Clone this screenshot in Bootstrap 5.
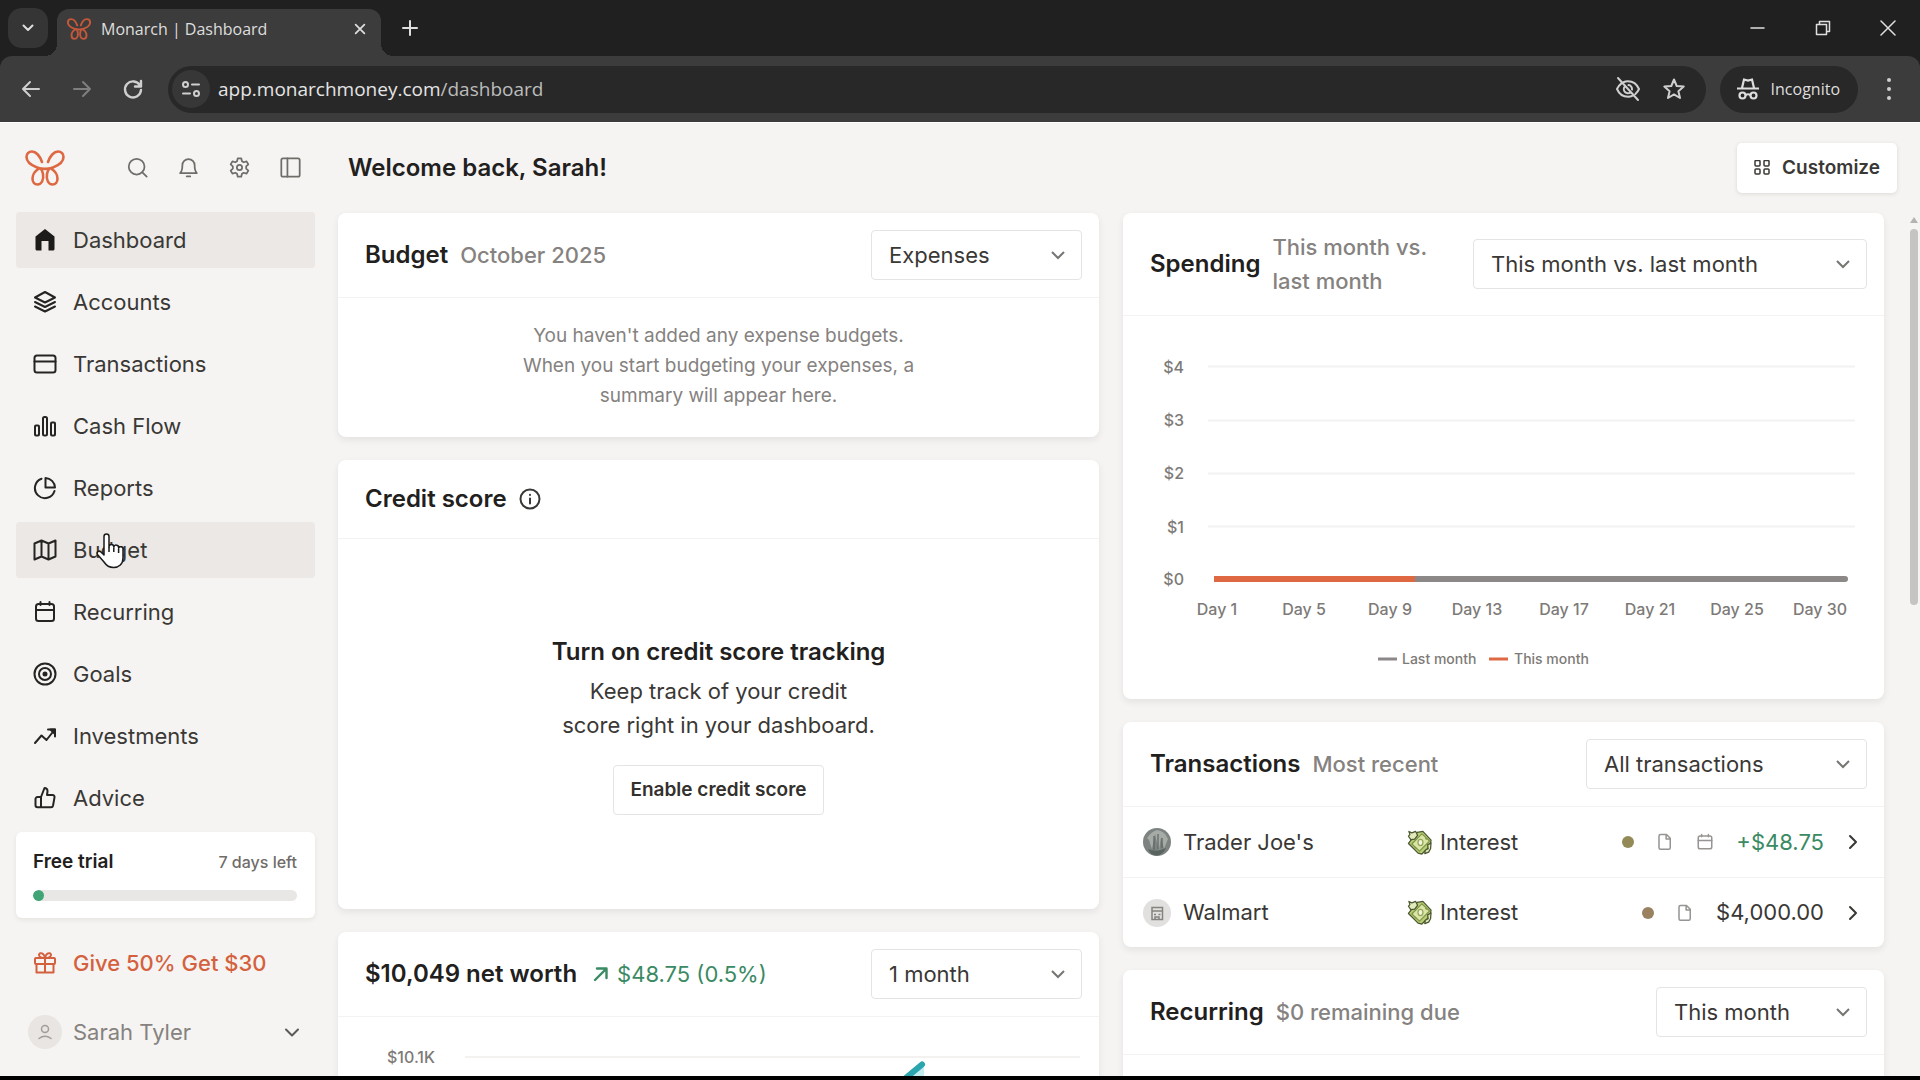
<!DOCTYPE html>
<html lang="en">
<head>
<meta charset="utf-8">
<meta name="viewport" content="width=device-width, initial-scale=1">
<title>Monarch | Dashboard</title>
<link href="https://cdn.jsdelivr.net/npm/bootstrap@5.3.0/dist/css/bootstrap.min.css" rel="stylesheet">
<style>
  :root { --ink:#22201d; --text:#3a3835; --muted:#85827f; --line:#f4f3f1; --orange:#dd6842; --green:#3a8a63; }
  body { font-family: Inter, "Liberation Sans", sans-serif; color: var(--text); background: #f5f4f2; }
  svg { display: block; flex: none; }
  .ico { fill: none; stroke: currentColor; stroke-width: 2; stroke-linecap: round; stroke-linejoin: round; }
  .ico.thin { stroke-width: 1.5; }
  .ico.bold { stroke-width: 2.4; }
  button.bare { background: none; border: 0; padding: 0; color: inherit; }

  /* browser window */
  .browser { background: #202020; color: #dedede; font-family: "Open Sans", "Noto Sans", sans-serif; }
  .tabstrip { height: 56px; padding-left: 8px; }
  .browser .tab-search { width: 40px; height: 40px; border-radius: 14px; background: #353535; margin-top: 8px; }
  .browser-tab { position: relative; width: 324px; height: 47px; margin: 9px 0 0 9px; padding: 0 14px 7px 10px; gap: 10px; background: #3c3c3c; border-radius: 12px 12px 0 0; font-size: 16px; }
  .browser-tab::before, .browser-tab::after { content: ""; position: absolute; bottom: 0; width: 12px; height: 12px; }
  .browser-tab::before { left: -12px; background: radial-gradient(circle at 0 0, transparent 12px, #3c3c3c 12px); }
  .browser-tab::after { right: -12px; background: radial-gradient(circle at 100% 0, transparent 12px, #3c3c3c 12px); }
  .win-ctl { width: 65px; height: 56px; }
  .toolbar { height: 66px; background: #3c3c3c; border-radius: 12px 12px 0 0; padding: 0 20px 0 19px; color: #cfcfcf; }
  .nav-btn { width: 24px; margin-right: 27px; }
  .toolbar .fwd { color: #7f7f7f; }
  .address { height: 47px; background: #282828; border-radius: 24px; padding: 0 20px 0 4px; margin-left: -4px; font-size: 19px; }
  .address .site-info { width: 38px; height: 38px; border-radius: 50%; background: #373737; }
  .url-host { color: #e4e4e4; } .url-path { color: #bcbcbc; }
  .incog { height: 47px; background: #282828; border-radius: 24px; padding: 0 18px 0 17px; margin: 0 20px 0 14px; font-size: 16px; color: #dedede; }

  /* app */
  .app { border-top: 1px solid #fff; border-bottom: 4px solid #000; min-height: 0; overflow: hidden; }
  .sidebar { width: 338px; padding: 0 23px 0 16px; flex: none; }
  .side-top { height: 89px; padding: 0 14px 0 9px; }
  .main-top { height: 90px; flex: none; }
  .side-tools { gap: 30px; color: #6f6c69; }
  .side-list { gap: 6px; }
  .side-link { position: relative; height: 56px; padding: 0 17px; gap: 16px; border-radius: 4px; color: var(--text); font-size: 22px; text-decoration: none; }
  .side-link.on { background: #ebe8e5; }
  .side-link .ico { color: #262422; }
  .side-link.refer, .side-link.refer .ico { color: #d4613e; }
  .side-link.refer { font-weight: 500; margin-top: 11px; }
  .side-link.user { color: var(--muted); margin-top: 7px; padding: 0 15px 0 12px; gap: 11px; width: 100%; text-align: left; }
  .side-link.user .ico { color: #5c5956; }
  .avatar { width: 34px; height: 34px; border-radius: 50%; background: #e8e5e2; flex: none; }
  .side-link .avatar .ico { color: #a19d99; }
  .hand { position: absolute; left: 79px; top: 10px; }
  .trial { background: #fff; border-radius: 6px; height: 86px; padding: 16px 18px 0 17px; box-shadow: 0 2px 5px rgba(40,30,20,.07); }
  .trial-name { font-size: 19px; font-weight: 600; color: var(--ink); line-height: 28px; }
  .trial-left { font-size: 16px; font-weight: 500; color: #6f6c69; line-height: 28px; }
  .trial .progress { height: 11px; margin-top: 14px; background: #e8e7e5; border-radius: 6px; }
  .trial .progress-bar { width: 4%; background: #3fa574; border-radius: 6px; }

  .welcome { font-size: 24px; font-weight: 600; color: var(--ink); margin: 0; padding-left: 10px; }
  .customize { height: 50px; background: #fff; border-radius: 5px; font-size: 19px; font-weight: 600; color: var(--text); padding: 0 16px; gap: 12px; margin-right: 23px; box-shadow: 0 1px 4px rgba(40,30,20,.12); }
  .cards { gap: 24px; margin-right: 24px; }
  .stack { gap: 23px; flex: 1 1 0; min-width: 0; }
  .panel { background: #fff; border-radius: 8px; box-shadow: 0 3px 7px rgba(40,30,20,.08); }
  .panel-head { padding: 17px 17px 17px 27px; border-bottom: 1px solid var(--line); gap: 12px; }
  .panel-title { font-size: 24px; font-weight: 600; color: var(--ink); margin: 0; line-height: 34px; }
  .panel-sub { font-size: 22px; font-weight: 500; color: var(--muted); line-height: 34px; }
  .panel .form-select { height: 50px; width: 211px; flex: none; margin-left: auto; border: 1px solid #e6e4e2; border-radius: 4px; font-size: 22px; color: var(--text); padding: 0 40px 0 17px; background-position: right 14px center; background-size: 18px 18px;
    background-image: url("data:image/svg+xml,%3Csvg xmlns='http://www.w3.org/2000/svg' viewBox='0 0 18 18'%3E%3Cpath d='M3 6l6 6 6-6' fill='none' stroke='%23777471' stroke-width='2'/%3E%3C/svg%3E"); }
  .panel .sel-wide { width: 394px; }
  .panel .sel-mid { width: 281px; }
  .empty-note { padding: 23px 0 26px; font-size: 19px; line-height: 30px; color: var(--muted); }
  .credit-head { padding: 22px 27px; border-bottom: 1px solid var(--line); gap: 12px; }
  .credit-body { padding: 96px 0 94px; font-size: 22px; line-height: 34px; }
  .credit-body h3 { font-size: 24px; font-weight: 600; color: var(--ink); line-height: 34px; margin: 0 0 5px; }
  .enable { height: 50px; margin-top: 23px; padding: 0 16px; border: 1px solid #e6e4e2; border-radius: 4px; background: #fff; font-size: 19px; font-weight: 600; color: #33302d; }
  .gain { font-size: 22px; color: var(--green); gap: 8px; margin-left: 4px; }
  .axis { font-size: 16px; font-weight: 500; fill: #7d7a77; }
  .legend-text { font-size: 14px; }
  .chart { width: 100%; height: auto; }
  .txn { display: grid; grid-template-columns: 264fr 453fr; height: 70px; padding: 0 24px 0 20px; font-size: 22px; align-items: center; }
  .txn + .txn { border-top: 1px solid var(--line); }
  .txn-marks { gap: 22px; }
  .dot { width: 12px; height: 12px; border-radius: 50%; flex: none; }
  .dot-olive { background: #938a58; }
  .dot-tan { background: #9a8260; }
  .pale { color: #979492; }
  .gainful { color: var(--green); }
  .rail { width: 12px; flex: none; }
  .thumb { width: 8px; height: 376px; border-radius: 4px; background: #c6c4c2; margin-top: 6px; }
</style>
</head>
<body class="d-flex flex-column vh-100 overflow-hidden">
<svg width="0" height="0" class="position-absolute" aria-hidden="true">
  <defs>
    <g id="butterfly" fill="none" stroke-linecap="round" stroke-linejoin="round">
      <path d="M17 12C15 6 11 1.500 7 1.500C3.500 1.500 1.500 4 1.500 7C1.500 12 7 15.500 12 17.500C16 19.300 24 19.300 28 17.500C33 15.500 38.500 12 38.500 7C38.500 4 36.500 1.500 33 1.500C29 1.500 25 6 23 12"/>
      <path d="M14 18.500C10 21 7.500 24.500 7.500 28.500C7.500 32 9.500 34.500 12.500 34.500C16.500 34.500 19 30 18 24C17.700 22 17 20 16 18.800M26 18.500C30 21 32.500 24.500 32.500 28.500C32.500 32 30.500 34.500 27.500 34.500C23.500 34.500 21 30 22 24C22.300 22 23 20 24 18.800"/>
    </g>
    <g id="cal"><rect x="3" y="4" width="18" height="17" rx="2.500"/><path d="M3 10h18M7.500 2v3M16.500 2v3"/></g>
    <g id="file"><path d="M6 2h8l5 5v12.500a2 2 0 0 1-2 2H6a2 2 0 0 1-2-2V4a2 2 0 0 1 2-2zM13.500 2v6H19"/></g>
    <g id="cash" stroke="#4a5730" stroke-width="1.300" stroke-linejoin="round">
      <path d="M1.500 14l9-11.500 6-1 8.500 9-1 6-8.500 8.500-4-1z" fill="#b9cc76"/>
      <path d="M5 14.500L15.500 4l8 7.500L13 22z" fill="#dbe6a6" stroke="#7f9648"/>
      <ellipse cx="14" cy="13" rx="2.600" ry="3.200" fill="#f1f5d8" stroke="#93a65a"/>
      <path d="M8 17.500l1.500 1.500M19 8.500l1.500 1.500" stroke="#7f9648"/>
      <path d="M2 1.500l3 1.500 4-1.500 2 4-3 4-4 .5L1.500 6.500l1.500-2z" fill="#e3ebbd"/>
      <path d="M25 13.500l-3.500 2 .5 4-3 1.500-.5 3.500 4-1.500 2-3.500z" fill="#e3ebbd"/>
    </g>
  </defs>
</svg>

<header class="browser flex-shrink-0">
  <div class="tabstrip d-flex">
    <button class="bare tab-search d-flex align-items-center justify-content-center" aria-label="Search tabs"><svg class="ico" width="16" height="16" viewBox="0 0 16 16"><path d="M3.500 5.500L8 10l4.500-4.500"/></svg></button>
    <div class="browser-tab d-flex align-items-center">
      <svg width="24" height="22" viewBox="0 0 40 36" stroke="#c4583a" stroke-width="3.200"><use href="#butterfly"/></svg>
      <span class="flex-grow-1">Monarch | Dashboard</span>
      <button class="bare" aria-label="Close tab"><svg class="ico" width="14" height="14" viewBox="0 0 16 16"><path d="M3 3l10 10M13 3L3 13"/></svg></button>
    </div>
    <button class="bare ms-3 ps-1" aria-label="New tab"><svg class="ico" width="18" height="18" viewBox="0 0 18 18"><path d="M9 2v14M2 9h14"/></svg></button>
    <div class="d-flex ms-auto">
      <button class="bare win-ctl d-flex align-items-center justify-content-center" aria-label="Minimize"><svg class="ico thin" width="16" height="16" viewBox="0 0 16 16"><path d="M1 8h13"/></svg></button>
      <button class="bare win-ctl d-flex align-items-center justify-content-center" aria-label="Restore"><svg class="ico thin" width="16" height="16" viewBox="0 0 16 16"><path d="M1.500 4.500h10v10h-10zM4.500 4.500v-3h10v10h-3"/></svg></button>
      <button class="bare win-ctl d-flex align-items-center justify-content-center" aria-label="Close"><svg class="ico thin" width="16" height="16" viewBox="0 0 16 16"><path d="M1 1l14 14M15 1L1 15"/></svg></button>
    </div>
  </div>
  <div class="toolbar d-flex align-items-center">
    <button class="bare nav-btn" aria-label="Back"><svg class="ico" width="24" height="24" viewBox="0 0 24 24"><path d="M20 12H4M11 5l-7 7 7 7"/></svg></button>
    <button class="bare nav-btn fwd" aria-label="Forward"><svg class="ico" width="24" height="24" viewBox="0 0 24 24"><path d="M4 12h16M13 5l7 7-7 7"/></svg></button>
    <button class="bare nav-btn" aria-label="Reload"><svg class="ico bold" width="24" height="24" viewBox="0 0 24 24"><path d="M19 8.500A8 8 0 1 0 20 13M20 4v5.500h-6"/></svg></button>
    <div class="address d-flex align-items-center flex-grow-1" role="group" aria-label="Address bar">
      <button class="bare site-info d-flex align-items-center justify-content-center" aria-label="Site information"><svg class="ico" width="20" height="20" viewBox="0 0 20 20"><circle cx="4.500" cy="5.500" r="2.500"/><path d="M11 5.500h7M2 14.500h7"/><circle cx="15.500" cy="14.500" r="2.500"/></svg></button>
      <span class="ms-2 flex-grow-1"><span class="url-host">app.monarchmoney.com</span><span class="url-path">/dashboard</span></span>
      <button class="bare me-3 pe-1" aria-label="Third-party cookies blocked"><svg class="ico" width="28" height="28" viewBox="0 0 28 28"><path d="M9 7.500C10.500 6.700 12.200 6.200 14 6.200c5 0 9 3.200 11 7.800-.9 2-2.100 3.700-3.600 5M18.800 20.700c-1.500.7-3.100 1.100-4.800 1.100-5 0-9-3.200-11-7.800 1-2.200 2.400-4 4.200-5.400M4 3l20 22M14.500 10a4 4 0 0 1 3.500 4.500M16.500 17.200a4 4 0 0 1-5.600-5.700"/></svg></button>
      <button class="bare" aria-label="Bookmark this tab"><svg class="ico" width="24" height="24" viewBox="0 0 24 24"><path d="M12 2.500l2.700 6.500 7 .6-5.300 4.600 1.600 6.800-6-3.600-6 3.600 1.600-6.800L2.300 9.600l7-.6z"/></svg></button>
    </div>
    <div class="incog d-flex align-items-center">
      <svg width="22" height="24" viewBox="0 0 22 24" fill="none" stroke="currentColor" stroke-width="2.200"><path d="M0 11.500h22M5 11l2-8.500 4 1 4-1L17 11"/><circle cx="5.500" cy="18.500" r="3"/><circle cx="16.500" cy="18.500" r="3"/><path d="M8.500 18q2.500-1.500 5 0"/></svg>
      <span class="ms-2 ps-1">Incognito</span>
    </div>
    <button class="bare" aria-label="Browser menu"><svg width="22" height="26" viewBox="0 0 22 26" fill="currentColor"><circle cx="11" cy="4" r="2"/><circle cx="11" cy="13" r="2"/><circle cx="11" cy="22" r="2"/></svg></button>
  </div>
</header>

<div class="app d-flex flex-grow-1">
  <nav class="sidebar" aria-label="Main">
    <div class="side-top d-flex align-items-center justify-content-between">
      <a href="#" aria-label="Monarch home"><svg width="40" height="36" viewBox="0 0 40 36" stroke="#dd6842" stroke-width="2.600"><use href="#butterfly"/></svg></a>
      <div class="side-tools d-flex">
        <button class="bare" aria-label="Search"><svg class="ico" width="21" height="21" viewBox="0 0 24 24"><circle cx="11" cy="11" r="9"/><path d="M17.500 17.500L22.500 22.500"/></svg></button>
        <button class="bare" aria-label="Notifications"><svg class="ico" width="21" height="21" viewBox="0 0 24 24"><path d="M2.500 18.500C5 16 5 13 5 9.500a7 7 0 0 1 14 0c0 3.500 0 6.500 2.500 9zM10 22.200h4"/></svg></button>
        <button class="bare" aria-label="Settings"><svg class="ico" width="21" height="21" viewBox="0 0 24 24"><circle cx="12" cy="12" r="3"/><path d="M10 1.500h4l.8 3.300 2 1.200 3.300-1 2 3.500-2.500 2.300v2.400l2.500 2.300-2 3.500-3.300-1-2 1.200-.8 3.300h-4l-.8-3.300-2-1.200-3.300 1-2-3.500 2.500-2.300v-2.400L1.900 8.500l2-3.500 3.300 1 2-1.200z"/></svg></button>
        <button class="bare" aria-label="Collapse sidebar"><svg class="ico" width="21" height="21" viewBox="0 0 24 24"><rect x="1.500" y="1.500" width="21" height="21" rx="2"/><path d="M8.500 1.500v21"/></svg></button>
      </div>
    </div>
    <div class="side-list d-flex flex-column">
      <a href="#" class="side-link on d-flex align-items-center" aria-current="page"><svg width="24" height="24" viewBox="0 0 24 24" fill="#1d1b19"><path d="M12 1L2.500 8.500V21A1.500 1.500 0 0 0 4 22.500h4.500V13h7v9.500H20a1.500 1.500 0 0 0 1.500-1.500V8.500z"/></svg>Dashboard</a>
      <a href="#" class="side-link d-flex align-items-center"><svg class="ico" width="24" height="24" viewBox="0 0 24 24"><path d="M12 2L2 7.500 12 12.500 22 7.500zM2 12l10 5 10-5M2 16.500l10 5 10-5"/></svg>Accounts</a>
      <a href="#" class="side-link d-flex align-items-center"><svg class="ico" width="24" height="24" viewBox="0 0 24 24"><rect x="1.500" y="3.500" width="21" height="17" rx="2.500"/><path d="M1.500 9.500h21"/></svg>Transactions</a>
      <a href="#" class="side-link d-flex align-items-center"><svg class="ico" width="24" height="24" viewBox="0 0 24 24"><rect x="2" y="11.500" width="4" height="10" rx="1"/><rect x="10" y="3" width="4" height="18.500" rx="1.500"/><rect x="18" y="8.500" width="4" height="13" rx="1"/></svg>Cash Flow</a>
      <a href="#" class="side-link d-flex align-items-center"><svg class="ico" width="24" height="24" viewBox="0 0 24 24"><path d="M8.500 2.700A10 10 0 1 0 21.500 15M12.500 2a10 10 0 0 1 9.500 9.500h-9.500z"/></svg>Reports</a>
      <a href="#" class="side-link on d-flex align-items-center"><svg class="ico" width="24" height="24" viewBox="0 0 24 24"><path d="M1.500 5.500l7-3 7 3 7-3v16l-7 3-7-3-7 3zM8.500 2.500v16M15.500 5.500v16"/></svg>Budget
        <svg class="hand" width="32" height="38" viewBox="0 0 32 38" fill="#fff" stroke="#1b1b1b" stroke-width="1.500" stroke-linejoin="round"><path d="M9 23V4.500a2.500 2.500 0 0 1 5 0V15a2.300 2.300 0 0 1 4.800 0 2.300 2.300 0 0 1 4.800 1.200 2.300 2.300 0 0 1 4.400 1.300V26c0 6-4 9.500-9.500 9.500-5 0-7.500-2.500-9.500-5.500L2.500 22.500c-1.500-2.500 1.500-4.500 3.500-2.500z"/><path d="M14 15v5M18.800 15.500V20M23.600 17v4" fill="none"/></svg></a>
      <a href="#" class="side-link d-flex align-items-center"><svg class="ico" width="24" height="24" viewBox="0 0 24 24"><use href="#cal"/></svg>Recurring</a>
      <a href="#" class="side-link d-flex align-items-center"><svg class="ico" width="24" height="24" viewBox="0 0 24 24"><circle cx="12" cy="12" r="10.500"/><circle cx="12" cy="12" r="6"/><circle cx="12" cy="12" r="1.500" fill="currentColor"/></svg>Goals</a>
      <a href="#" class="side-link d-flex align-items-center"><svg class="ico" width="24" height="24" viewBox="0 0 24 24"><path d="M2 19l6.500-7.500 5 4.500L21 6.500M15 5.500h7v7"/><path d="M17.500 5.500H22V10z" fill="currentColor"/></svg>Investments</a>
      <a href="#" class="side-link d-flex align-items-center"><svg class="ico" width="24" height="24" viewBox="0 0 24 24"><path d="M8 11l3.500-9c2 0 3.200 1.500 3 3.500L14 9h5.500a2 2 0 0 1 2 2.400l-1.500 8.300a2 2 0 0 1-2 1.600H4.500a2 2 0 0 1-2-2V13a2 2 0 0 1 2-2zM8 11v10"/></svg>Advice</a>
      <div class="trial">
        <div class="d-flex justify-content-between"><span class="trial-name">Free trial</span><span class="trial-left">7 days left</span></div>
        <div class="progress" role="progressbar" aria-label="Trial used" aria-valuenow="4" aria-valuemin="0" aria-valuemax="100"><div class="progress-bar"></div></div>
      </div>
      <a href="#" class="side-link refer d-flex align-items-center"><svg class="ico" width="24" height="24" viewBox="0 0 24 24"><rect x="2" y="7" width="20" height="6" rx="1"/><path d="M3.500 13v8.500h17V13M12 7v14.500M12 7C8 7 5.500 5.500 6 3.500 7 1 11 2 12 7zM12 7c4 0 6.500-1.500 6-3.500C17 1 13 2 12 7z"/></svg>Give 50% Get $30</a>
      <button class="bare side-link user d-flex align-items-center"><span class="avatar d-flex align-items-center justify-content-center"><svg class="ico thin" width="18" height="18" viewBox="0 0 18 18"><circle cx="9" cy="6" r="3.500"/><path d="M3 15.500q6-4.500 12 0"/></svg></span>Sarah Tyler<svg class="ico ms-auto" width="16" height="16" viewBox="0 0 16 16"><path d="M2 5.500l6 6 6-6"/></svg></button>
    </div>
  </nav>

  <main class="flex-grow-1 d-flex flex-column">
    <div class="main-top d-flex align-items-center justify-content-between">
      <h1 class="welcome">Welcome back, Sarah!</h1>
      <button class="btn customize d-flex align-items-center"><svg class="ico thin" width="16" height="16" viewBox="0 0 16 16"><rect x="1" y="0.500" width="5" height="5.500" rx="1"/><rect x="10" y="0.500" width="5" height="5.500" rx="1"/><rect x="1" y="9" width="5" height="5" rx="1"/><rect x="10" y="9" width="5" height="5" rx="1"/></svg>Customize</button>
    </div>
    <div class="d-flex flex-grow-1">
      <div class="cards d-flex flex-grow-1 align-items-start">
        <div class="stack d-flex flex-column">
          <section class="panel">
            <div class="panel-head d-flex align-items-center">
              <h2 class="panel-title">Budget</h2><span class="panel-sub">October 2025</span>
              <select class="form-select" aria-label="Budget type"><option>Expenses</option><option>Income</option></select>
            </div>
            <div class="empty-note text-center">You haven't added any expense budgets.<br>When you start budgeting your expenses, a<br>summary will appear here.</div>
          </section>
          <section class="panel">
            <div class="credit-head d-flex align-items-center">
              <h2 class="panel-title">Credit score</h2>
              <svg class="ico" width="22" height="22" viewBox="0 0 22 22"><circle cx="11" cy="11" r="9.500"/><path d="M11 10.500v5M11 6.800v.1"/></svg>
            </div>
            <div class="credit-body text-center">
              <h3>Turn on credit score tracking</h3>
              <div>Keep track of your credit<br>score right in your dashboard.</div>
              <button class="enable">Enable credit score</button>
            </div>
          </section>
          <section class="panel">
            <div class="panel-head d-flex align-items-center">
              <h2 class="panel-title">$10,049 net worth</h2>
              <span class="gain d-flex align-items-center"><svg class="ico bold" width="16" height="16" viewBox="0 0 16 16"><path d="M2 14L13 3M4 2.500h9.500V12"/></svg>$48.75 (0.5%)</span>
              <select class="form-select" aria-label="Net worth period"><option>1 month</option><option>3 months</option></select>
            </div>
            <svg class="chart" viewBox="0 0 761 200" role="img" aria-label="Net worth over one month">
              <text class="axis" x="97" y="46" text-anchor="end">$10.1K</text>
              <path d="M127 40h615" stroke="#f3f2f1" stroke-width="2"/>
              <path d="M586 46l-22 20-20 40v90h42z" fill="#c4edf1"/>
              <path d="M584 47.500L563 65l-40 60" fill="none" stroke="#2ba5ae" stroke-width="6" stroke-linecap="round"/>
            </svg>
          </section>
        </div>

        <div class="stack d-flex flex-column">
          <section class="panel">
            <div class="panel-head d-flex align-items-center">
              <h2 class="panel-title">Spending</h2><span class="panel-sub">This month vs.<br>last month</span>
              <select class="form-select sel-wide" aria-label="Spending comparison"><option>This month vs. last month</option></select>
            </div>
            <svg class="chart" viewBox="0 0 761 383" role="img" aria-label="Spending by day, this month and last month">
              <path d="M85 50.500h647M85 104.500h647M85 157.500h647M85 210.500h647" stroke="#f3f2f1" stroke-width="2"/>
              <g class="axis" text-anchor="end"><text x="61" y="57">$4</text><text x="61" y="110">$3</text><text x="61" y="163">$2</text><text x="61" y="217">$1</text><text x="61" y="269">$0</text></g>
              <path d="M288 263h434" stroke="#8c8887" stroke-width="6" stroke-linecap="round"/>
              <path d="M91 263h201" stroke="#dd6842" stroke-width="6"/>
              <g class="axis" text-anchor="middle"><text x="94" y="299">Day 1</text><text x="181" y="299">Day 5</text><text x="267" y="299">Day 9</text><text x="354" y="299">Day 13</text><text x="441" y="299">Day 17</text><text x="527" y="299">Day 21</text><text x="614" y="299">Day 25</text><text x="697" y="299">Day 30</text></g>
              <path d="M255 343h19" stroke="#8c8887" stroke-width="3"/><path d="M366 343h19" stroke="#dd6842" stroke-width="3"/>
              <g class="axis"><text class="legend-text" x="279" y="348">Last month</text><text class="legend-text" x="391" y="348">This month</text></g>
            </svg>
          </section>
          <section class="panel">
            <div class="panel-head d-flex align-items-center">
              <h2 class="panel-title">Transactions</h2><span class="panel-sub">Most recent</span>
              <select class="form-select sel-mid" aria-label="Transaction filter"><option>All transactions</option></select>
            </div>
            <div class="txn">
              <div class="d-flex align-items-center"><svg width="28" height="28" viewBox="0 0 28 28"><circle cx="14" cy="14" r="14" fill="#7c8381"/><path d="M4 10q5-7 10-8 8 1 11 9l-4 10-3-12-2 14-4-17-3 15-3-9z" fill="#a6aba6"/><path d="M5 21q8 4 18-1-3 7-9 7.500T5 21z" fill="#596361"/><path d="M11 8v14M15 6v15M19 10v10" stroke="#5d6664" stroke-width="1.200"/></svg><span class="ms-2 ps-1">Trader Joe's</span></div>
              <div class="d-flex align-items-center">
                <svg width="25" height="25" viewBox="0 0 26 26"><use href="#cash"/></svg><span class="ms-2">Interest</span>
                <div class="txn-marks d-flex align-items-center ms-auto">
                  <span class="dot dot-olive"></span>
                  <svg class="ico pale" width="18" height="18" viewBox="0 0 24 24"><use href="#file"/></svg>
                  <svg class="ico pale" width="18" height="18" viewBox="0 0 24 24"><use href="#cal"/></svg>
                  <span class="gainful">+$48.75</span>
                  <svg class="ico" width="14" height="16" viewBox="0 0 14 16"><path d="M4 2l6 6-6 6"/></svg>
                </div>
              </div>
            </div>
            <div class="txn">
              <div class="d-flex align-items-center"><svg width="28" height="28" viewBox="0 0 28 28"><circle cx="14" cy="14" r="14" fill="#e2e0de"/><g fill="none" stroke="#85827f" stroke-width="1.500"><rect x="9" y="8.500" width="10.500" height="12"/><path d="M9 12h10.500M11 15.500h2M15.500 15.500h2M12 20v-2h4v2"/></g></svg><span class="ms-2 ps-1">Walmart</span></div>
              <div class="d-flex align-items-center">
                <svg width="25" height="25" viewBox="0 0 26 26"><use href="#cash"/></svg><span class="ms-2">Interest</span>
                <div class="txn-marks d-flex align-items-center ms-auto">
                  <span class="dot dot-tan"></span>
                  <svg class="ico pale" width="18" height="18" viewBox="0 0 24 24"><use href="#file"/></svg>
                  <span>$4,000.00</span>
                  <svg class="ico" width="14" height="16" viewBox="0 0 14 16"><path d="M4 2l6 6-6 6"/></svg>
                </div>
              </div>
            </div>
          </section>
          <section class="panel">
            <div class="panel-head d-flex align-items-center">
              <h2 class="panel-title">Recurring</h2><span class="panel-sub">$0 remaining due</span>
              <select class="form-select" aria-label="Recurring period"><option>This month</option></select>
            </div>
            <div class="py-5"></div>
          </section>
        </div>
      </div>
      <div class="rail d-flex flex-column align-items-center">
        <svg width="8" height="6" viewBox="0 0 8 6" class="mt-1" fill="#b5b3b1"><path d="M4 0l4 6H0z"/></svg>
        <div class="thumb"></div>
      </div>
    </div>
  </main>
</div>
<script src="https://cdn.jsdelivr.net/npm/bootstrap@5.3.0/dist/js/bootstrap.bundle.min.js"></script>
</body>
</html>
